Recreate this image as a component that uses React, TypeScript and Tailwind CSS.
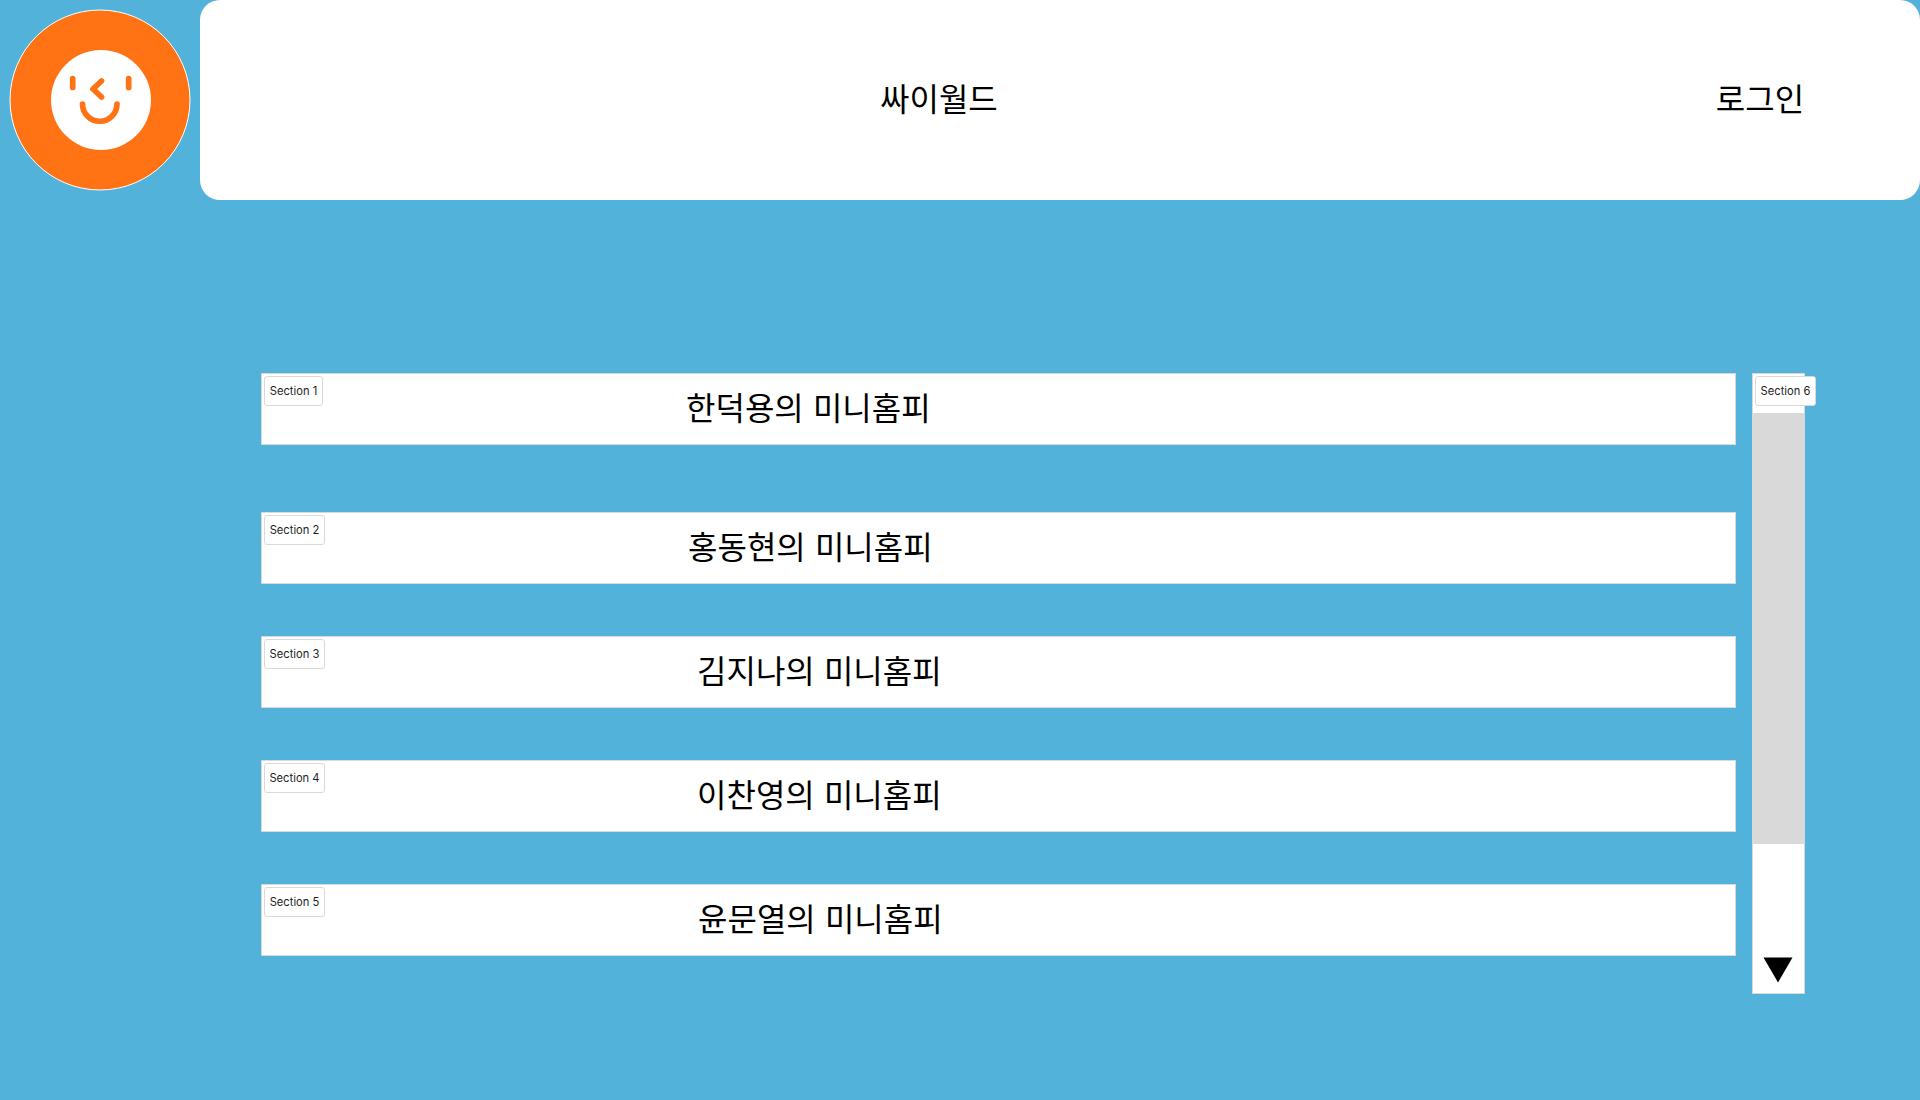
const font = "[font-family:'Noto_Sans_CJK_KR','Inter',sans-serif]";

function Logo() {
  return (
    <svg width="182" height="182" viewBox="9 9 182 182" className="shrink-0">
      <circle cx="100" cy="100" r="90" fill="#FF7315" stroke="#ffffff" strokeWidth="1" />
      <circle cx="101" cy="100" r="50" fill="#ffffff" />
      <g fill="none" stroke="#FF7315" strokeWidth="5.7" strokeLinecap="round" strokeLinejoin="round">
        <path d="M72.7 78.5 V87.5" />
        <path d="M128.7 78.5 V87.5" />
        <path d="M101.5 81 L93 89 L101.5 97" />
        <path d="M82.5 104 A17.25 17.25 0 0 0 117 104" />
      </g>
    </svg>
  );
}

function Tag({ label, w }: { label: string; w: string }) {
  return (
    <div
      className={`absolute left-[2px] top-[2px] h-[30px] ${w} flex items-center justify-center rounded-[3px] border border-[#d9d9d9] bg-white text-[11.2px] text-[#1e1e1e] [font-family:'Inter',sans-serif]`}
    >
      {label}
    </div>
  );
}

function Row({ tag, tagW, title, pad, mt }: { tag: string; tagW: string; title: string; pad: string; mt: string }) {
  return (
    <div className={`relative flex h-[72px] w-[1475px] items-start bg-white border border-[#d9d9d9] ${pad} ${mt}`}>
      <Tag label={tag} w={tagW} />
      <span className="mt-[12px] text-[32px] leading-[40px] text-black [word-spacing:2px]">{title}</span>
    </div>
  );
}

export default function App() {
  return (
    <div className={`min-h-[1100px] w-full overflow-hidden bg-[#52b2d9] ${font}`}>
      <header className="flex h-[200px] items-start">
        <div className="mt-[9px] ml-[9px] mr-[9px]">
          <Logo />
        </div>
        <div className="flex h-[200px] flex-1 items-start rounded-[20px] bg-white pt-[77px] text-[32px] leading-[40px] text-black">
          <span className="ml-[680px]">싸이월드</span>
          <span className="ml-[718px]">로그인</span>
        </div>
      </header>
      <main className="flex items-start gap-[16px] pl-[261px] pt-[173px]">
        <div className="flex flex-col">
          <Row tag="Section 1" tagW="w-[59px]" title="한덕용의 미니홈피" pad="pl-[424px]" mt="" />
          <Row tag="Section 2" tagW="w-[61px]" title="홍동현의 미니홈피" pad="pl-[426px]" mt="mt-[67px]" />
          <Row tag="Section 3" tagW="w-[61px]" title="김지나의 미니홈피" pad="pl-[435px]" mt="mt-[52px]" />
          <Row tag="Section 4" tagW="w-[61px]" title="이찬영의 미니홈피" pad="pl-[435px]" mt="mt-[52px]" />
          <Row tag="Section 5" tagW="w-[61px]" title="윤문열의 미니홈피" pad="pl-[436px]" mt="mt-[52px]" />
        </div>
        <div className="relative flex h-[621px] w-[53px] flex-col border border-[#d9d9d9] bg-white">
          <div className="absolute left-[2px] top-[2px] flex h-[30px] w-[61px] items-center justify-center rounded-[3px] border border-[#d9d9d9] bg-white text-[11.2px] text-[#1e1e1e] [font-family:'Inter',sans-serif]">
            Section 6
          </div>
          <div className="mt-[39px] h-[431px] bg-[#d9d9d9]" />
          <div className="flex flex-1 items-end justify-center pb-[10px] pr-[1px]">
            <svg width="30" height="26" viewBox="0 0 30 26">
              <path d="M0.5 0.5 H29.5 L15 25.5 Z" fill="#000000" />
            </svg>
          </div>
        </div>
      </main>
    </div>
  );
}
